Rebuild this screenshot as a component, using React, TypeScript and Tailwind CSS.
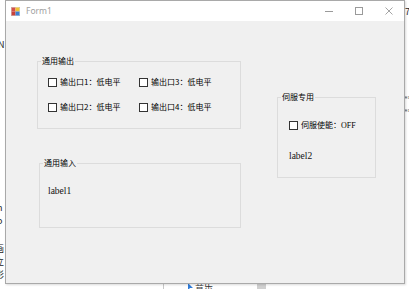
import React from "react";

const cjk = "font-['Noto_Sans_CJK_SC','Microsoft_YaHei',sans-serif]";
const mono = "font-['Liberation_Mono','Noto_Sans_CJK_SC',monospace]";
const serif = "font-['Liberation_Serif','Noto_Sans_CJK_SC',serif]";

function Check({ label, suffix }: { label: string; suffix?: string }) {
  return (
    <label className="flex h-[12px] items-center gap-[3px] whitespace-nowrap">
      <span className="h-[9px] w-[9px] shrink-0 border border-[#333333] bg-white" />
      <span className={`${cjk} text-[8px] leading-[12px] text-black`}>
        {label}
        {suffix && <span className={`${serif} text-[8px] text-black`}>{suffix}</span>}
      </span>
    </label>
  );
}

function Group({
  title,
  className,
  children,
}: {
  title: string;
  className: string;
  children?: React.ReactNode;
}) {
  return (
    <fieldset className={`border border-[#dcdcdc] ${className}`}>
      <legend className={`${cjk} ml-[3px] px-[1px] text-[8px] leading-[10px] text-black`}>{title}</legend>
      {children}
    </fieldset>
  );
}

function AppIcon() {
  return (
    <svg width="9" height="9" viewBox="0 0 9 9">
      <rect x="0" y="0" width="9" height="9" fill="#ffffff" stroke="#8a8a8a" strokeWidth="0.6" />
      <rect x="0.5" y="0.5" width="4" height="4" fill="#d2504a" />
      <rect x="4.5" y="0.5" width="4" height="4" fill="#f1c232" />
      <rect x="0.5" y="4.5" width="4" height="4" fill="#c8423a" />
      <rect x="4.5" y="4.5" width="4" height="4" fill="#3d7fd1" />
    </svg>
  );
}

export default function App() {
  return (
    <div className="relative h-[289px] w-[409px] overflow-hidden bg-white">
      {/* desktop content peeking around the window */}
      <span className={`${cjk} absolute left-[-2px] top-[40px] text-[9px] leading-[10px] text-[#222]`}>N</span>
      <span className={`${cjk} absolute left-[-3px] top-[203px] text-[9px] leading-[10px] text-[#222]`}>h</span>
      <span className={`${cjk} absolute left-[-3px] top-[216px] text-[9px] leading-[10px] text-[#222]`}>o</span>
      <span className={`${cjk} absolute left-[-5px] top-[244px] text-[9px] leading-[10px] text-[#222]`}>画</span>
      <span className={`${cjk} absolute left-[-5px] top-[257px] text-[9px] leading-[10px] text-[#222]`}>立</span>
      <span className={`${cjk} absolute left-[-5px] top-[270px] text-[9px] leading-[10px] text-[#222]`}>影</span>
      <span className={`${cjk} absolute left-[405px] top-[7px] text-[9px] leading-[10px] text-[#222]`}>7</span>
      <span className={`${mono} absolute left-[404px] top-[95px] text-[6px] leading-[6px] text-[#444]`}>ex</span>
      <span className={`${mono} absolute left-[404px] top-[108px] text-[6px] leading-[6px] text-[#444]`}>ex</span>
      <div className="absolute left-[163px] top-[284px] h-[6px] w-px bg-[#c8c8c8]" />
      <svg className="absolute left-[188px] top-[283px]" width="6" height="7" viewBox="0 0 6 7">
        <path d="M0 0 L0 7 L2 5 L5 5 Z" fill="#2f7bd8" />
      </svg>
      <span className={`${cjk} absolute left-[195px] top-[282px] text-[9px] leading-[10px] text-[#333]`}>音乐</span>
      <div className="absolute left-[257px] top-[284px] h-[6px] w-[9px] bg-[#d0d0d0]" />

      {/* Form1 window */}
      <div className="absolute left-[5px] top-0 flex h-[284px] w-[400px] flex-col border border-[#a9a9a9] bg-[#f0f0f0] shadow-[1px_1px_2px_rgba(0,0,0,0.15)]">
        <div className="flex h-[20px] shrink-0 items-center bg-white">
          <div className="ml-[5px] flex items-center">
            <AppIcon />
          </div>
          <span className="ml-[6px] font-['Noto_Sans',sans-serif] text-[8.5px] leading-[10px] text-[#a0a0a0]">Form1</span>
          <div className="ml-auto flex h-full">
            <div className="flex w-[30px] items-center justify-center">
              <div className="h-px w-[8px] bg-[#9a9a9a]" />
            </div>
            <div className="flex w-[30px] items-center justify-center">
              <div className="h-[8px] w-[8px] border border-[#9a9a9a]" />
            </div>
            <div className="flex w-[30px] items-center justify-center">
              <svg width="8" height="8" viewBox="0 0 8 8">
                <path d="M0.5 0.5 L7.5 7.5 M7.5 0.5 L0.5 7.5" stroke="#9a9a9a" strokeWidth="0.9" />
              </svg>
            </div>
          </div>
        </div>

        <div className="flex flex-1 items-start pl-[31px]">
          <div className="flex w-[204px] flex-col">
            <Group title="通用输出" className="mt-[35px] h-[73px] w-[204px]">
              <div className="grid grid-cols-[91px_auto] gap-y-[13px] pl-[10px] pt-[10px]">
                <Check label="输出口1：低电平" />
                <Check label="输出口3：低电平" />
                <Check label="输出口2：低电平" />
                <Check label="输出口4：低电平" />
              </div>
            </Group>
            <Group title="通用输入" className="ml-[2px] mt-[29px] h-[70px] w-[202px]">
              <div className={`${serif} pl-[8px] pt-[18px] text-[9.5px] leading-[10px] text-[#111]`}>label1</div>
            </Group>
          </div>
          <Group title="伺服专用" className="ml-[36px] mt-[71px] h-[86px] w-[99px]">
            <div className="flex flex-col pl-[11px] pt-[17px]">
              <Check label="伺服使能：" suffix="OFF" />
              <div className={`${serif} mt-[20px] text-[9.5px] leading-[10px] text-[#111]`}>label2</div>
            </div>
          </Group>
        </div>
      </div>
    </div>
  );
}
